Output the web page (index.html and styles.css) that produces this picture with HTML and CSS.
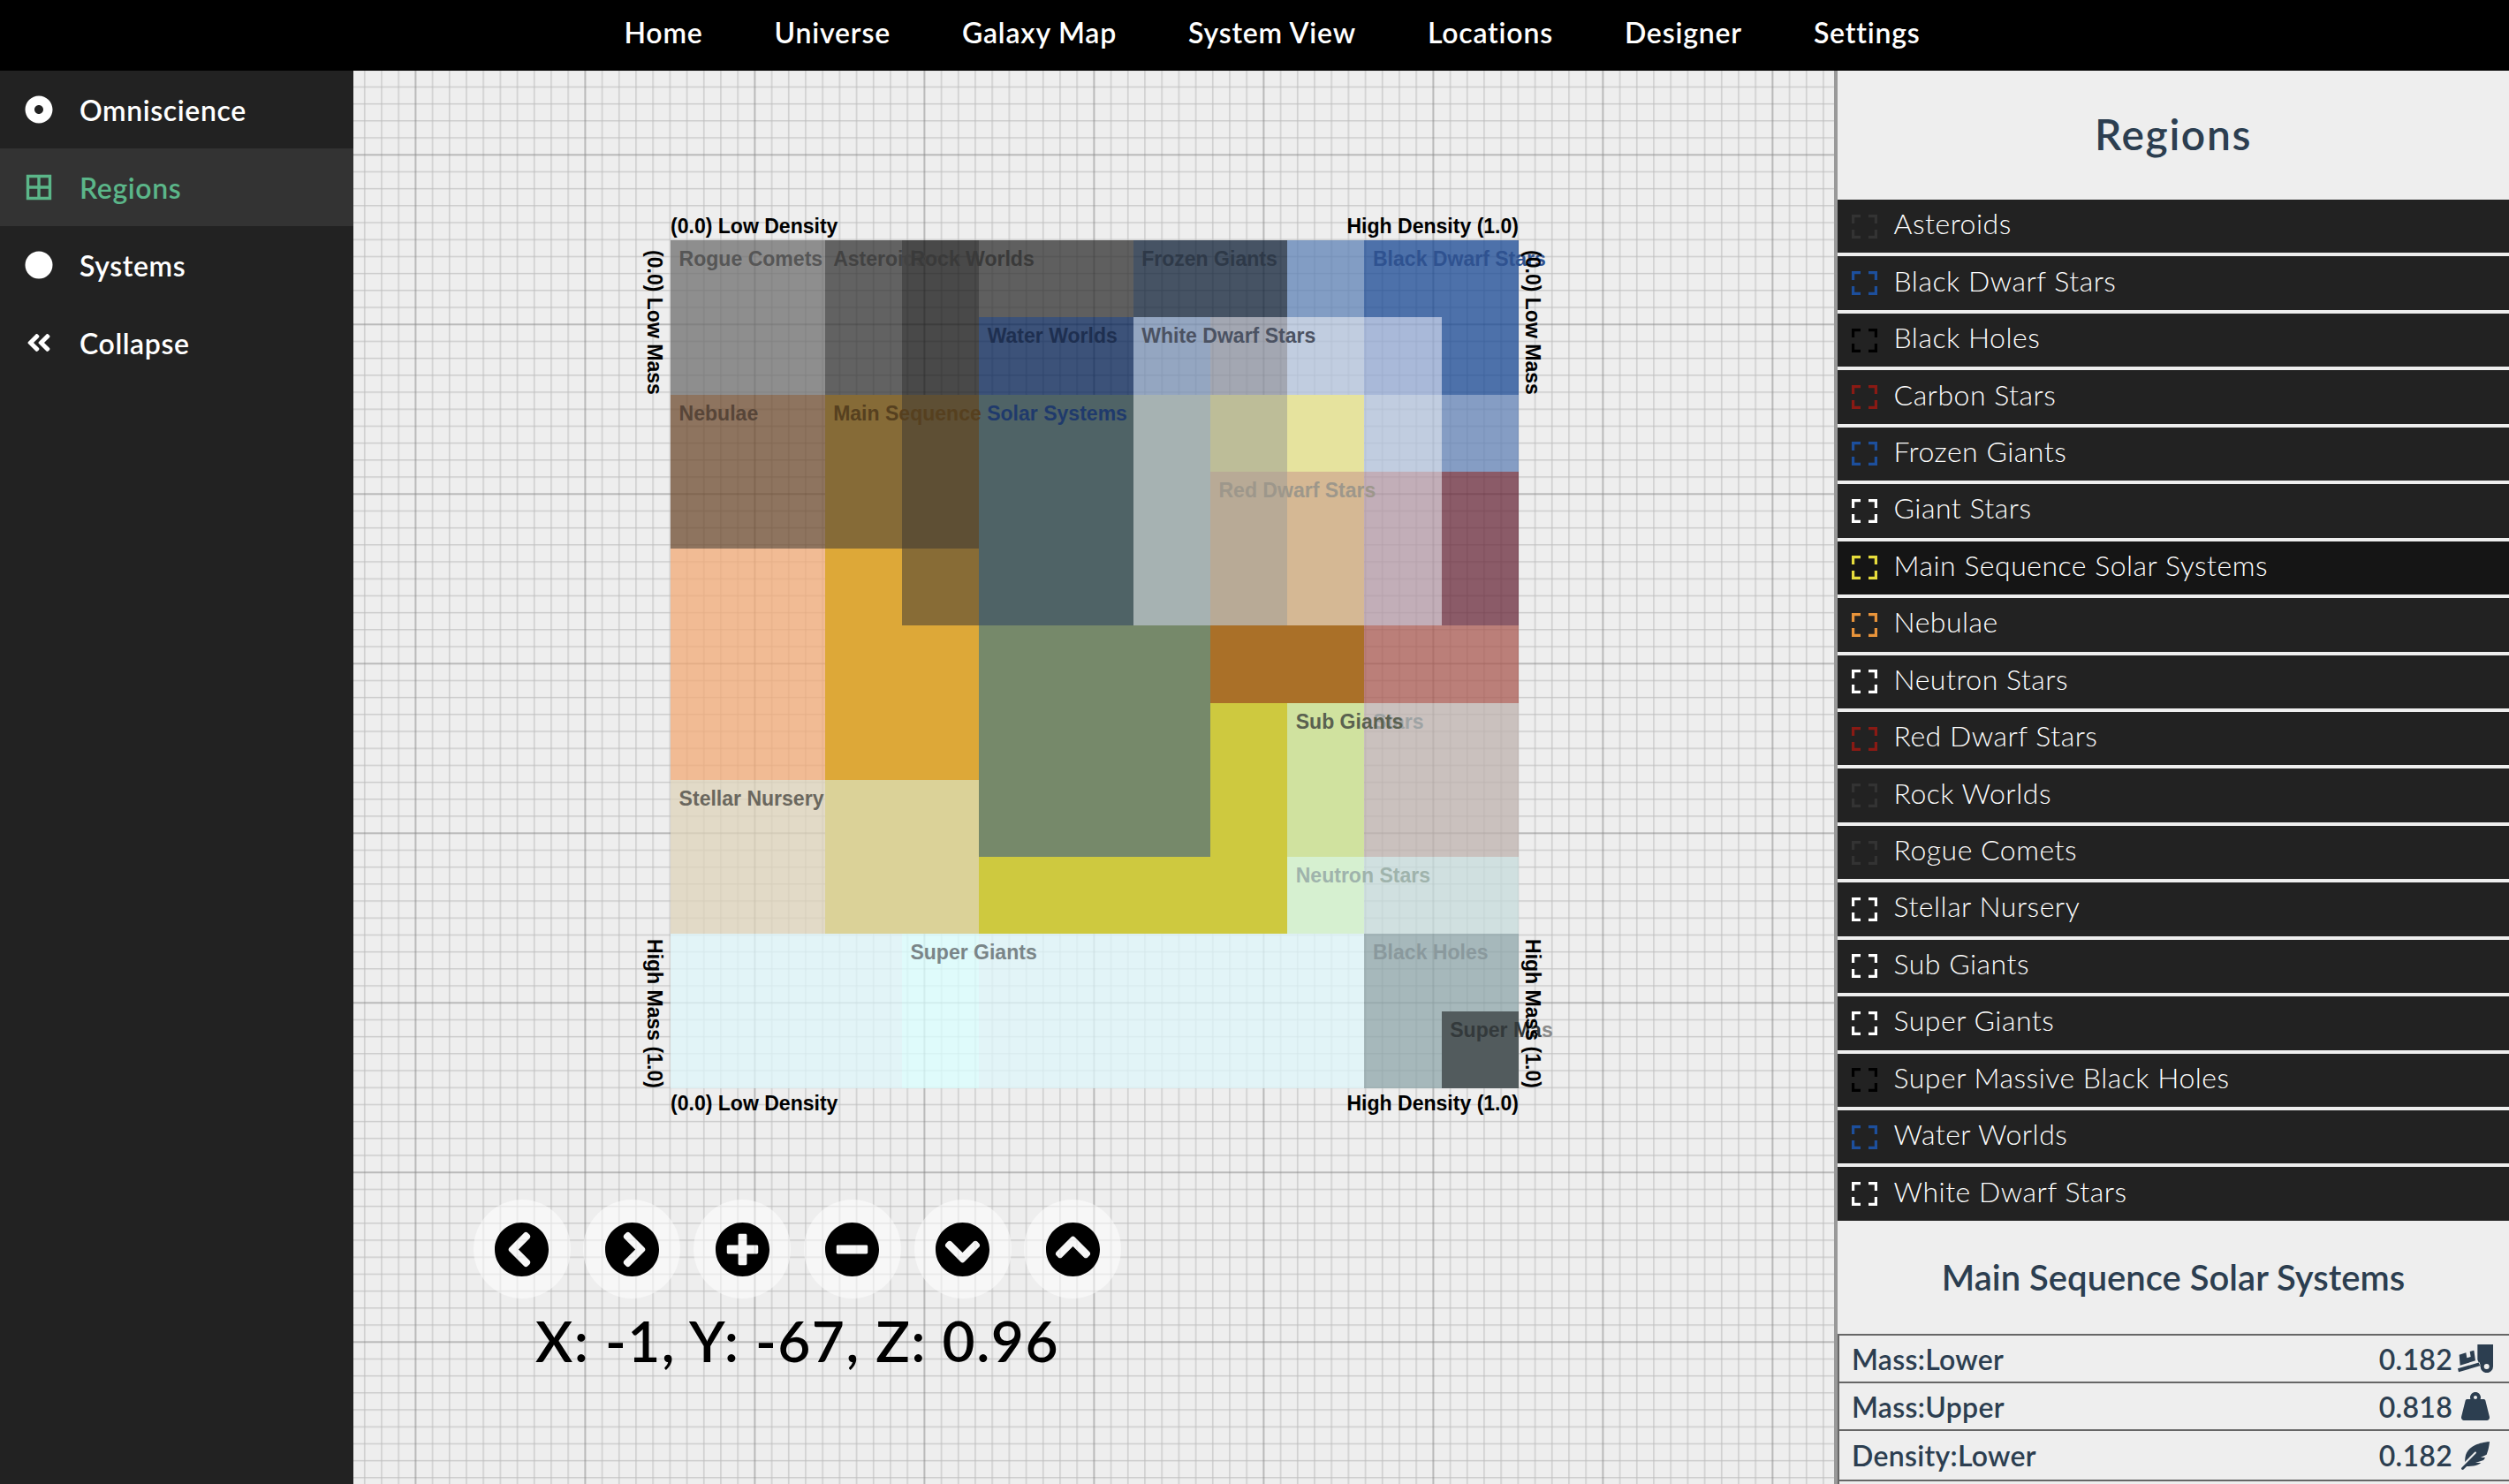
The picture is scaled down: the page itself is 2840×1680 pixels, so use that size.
FILE: index.html
```html
<!DOCTYPE html>
<html lang="en">
<head>
<meta charset="utf-8">
<title>Regions</title>
<link rel="stylesheet" href="styles.css">
</head>
<body>
<div class="app">
  <nav class="topnav">
    <a>Home</a><a>Universe</a><a>Galaxy Map</a><a>System View</a><a>Locations</a><a>Designer</a><a>Settings</a>
  </nav>

  <aside class="sidebar">
    <a class="side-item">
      <svg class="side-icon" viewBox="0 0 512 512"><path d="M256 8C119 8 8 119 8 256s111 248 248 248 248-111 248-248S393 8 256 8zm80 248c0 44.112-35.888 80-80 80s-80-35.888-80-80 35.888-80 80-80 80 35.888 80 80z"/></svg>
      <span>Omniscience</span>
    </a>
    <a class="side-item active">
      <svg class="side-icon" viewBox="0 0 32 32"><path class="grid-glyph" d="M3.5 3.5h25v25h-25zM16 3.500v25M3.500 16h25"/></svg>
      <span>Regions</span>
    </a>
    <a class="side-item">
      <svg class="side-icon" viewBox="0 0 512 512"><circle cx="256" cy="256" r="248"/></svg>
      <span>Systems</span>
    </a>
    <a class="side-item">
      <svg class="side-icon" viewBox="0 0 448 512"><path d="M223.7 239l136-136c9.400-9.400 24.600-9.400 33.900 0l22.600 22.600c9.400 9.400 9.400 24.600 0 33.900L319.900 256l96.400 96.400c9.400 9.400 9.400 24.600 0 33.900L393.700 409c-9.400 9.400-24.600 9.400-33.900 0l-136-136c-9.500-9.400-9.500-24.600-.1-34zm-192 34l136 136c9.400 9.400 24.600 9.400 33.900 0l22.600-22.600c9.400-9.400 9.400-24.600 0-33.900L127.900 256l96.400-96.400c9.400-9.400 9.400-24.600 0-33.900L201.700 103c-9.400-9.400-24.600-9.400-33.900 0l-136 136c-9.500 9.400-9.500 24.600-.1 34z"/></svg>
      <span>Collapse</span>
    </a>
  </aside>

  <main class="canvas">
    <svg class="gridlines" width="100%" height="100%">
      <defs>
        <pattern id="tile" width="192" height="192" patternUnits="userSpaceOnUse" patternTransform="translate(70.4 95.3)">
          <path class="minor" d="M19.2 0v192M38.400 0v192M57.600 0v192M76.800 0v192M96 0v192M115.200 0v192M134.400 0v192M153.600 0v192M172.800 0v192M0 19.200h192M0 38.400h192M0 57.600h192M0 76.800h192M0 96h192M0 115.200h192M0 134.400h192M0 153.600h192M0 172.800h192"/>
          <path class="major" d="M0 0v192M192 0v192M0 0h192M0 192h192"/>
        </pattern>
      </defs>
      <rect width="100%" height="100%" fill="url(#tile)"/>
    </svg>

    <section class="chart">
      <div class="axis-h axis-top">
        <span>(0.0) Low Density</span><span>High Density (1.0)</span>
      </div>
      <div class="axis-v axis-left">
        <span>(0.0) Low Mass</span><span>High Mass (1.0)</span>
      </div>
      <div class="plot">
        <i class="p p1"></i><i class="p p2"></i><i class="p p3"></i><i class="p p4"></i><i class="p p5"></i>
        <i class="p p6"></i><i class="p p7"></i><i class="p p8"></i><i class="p p9"></i><i class="p p10"></i>
        <i class="p p11"></i><i class="p p12"></i><i class="p p13"></i><i class="p p14"></i><i class="p p15"></i>
        <i class="p p16"></i><i class="p p17"></i><i class="p p18"></i><i class="p p19"></i><i class="p p20"></i>
        <i class="p p21"></i><i class="p p22"></i><i class="p p23"></i><i class="p p24"></i><i class="p p25"></i>
        <i class="p p26"></i><i class="p p27"></i><i class="p p28"></i><i class="p p29"></i><i class="p p30"></i>
        <i class="p p31"></i><i class="p p32"></i><i class="p p33"></i><i class="p p34"></i><i class="p p35"></i>
        <i class="p p36"></i><i class="p p37"></i><i class="p p38"></i><i class="p p39"></i><i class="p p40"></i>
        <i class="p p41"></i><i class="p p42"></i><i class="p p43"></i><i class="p p44"></i><i class="p p45"></i>
        <i class="p p46"></i><i class="p p47"></i>

        <b class="l l-rogue">Rogue Comets</b>
        <b class="l l-asteroids">Asteroids</b>
        <b class="l l-rock">Rock Worlds</b>
        <b class="l l-frozen">Frozen Giants</b>
        <b class="l l-bdwarf">Black Dwarf Stars</b>
        <b class="l l-water">Water Worlds</b>
        <b class="l l-wdwarf">White Dwarf Stars</b>
        <b class="l l-nebulae">Nebulae</b>
        <b class="l l-main">Main Sequence <em class="l-solar">Solar Systems</em></b>
        <b class="l l-rdwarf">Red Dwarf Stars</b>
        <b class="l l-stars">Stars</b>
        <b class="l l-sub">Sub Giants</b>
        <b class="l l-stellar">Stellar Nursery</b>
        <b class="l l-neutron">Neutron Stars</b>
        <b class="l l-super">Super Giants</b>
        <b class="l l-bholes">Black Holes</b>
        <b class="l l-smbh">Super Ma<em class="l-faint">s</em></b>
      </div>
      <div class="axis-v axis-right">
        <span>(0.0) Low Mass</span><span>High Mass (1.0)</span>
      </div>
      <div class="axis-h axis-bottom">
        <span>(0.0) Low Density</span><span>High Density (1.0)</span>
      </div>
    </section>

    <div class="controls">
      <div class="buttons">
        <button class="halo"><svg viewBox="0 0 512 512"><path d="M256 504C119 504 8 393 8 256S119 8 256 8s248 111 248 248-111 248-248 248zM142.100 273l135.500 135.500c9.400 9.400 24.600 9.400 33.900 0l17-17c9.400-9.400 9.400-24.600 0-33.900L226.900 256l101.600-101.600c9.400-9.400 9.400-24.600 0-33.900l-17-17c-9.400-9.400-24.600-9.400-33.900 0L142.100 239c-9.400 9.400-9.400 24.600 0 34z"/></svg></button>
        <button class="halo"><svg viewBox="0 0 512 512"><path d="M256 8c137 0 248 111 248 248S393 504 256 504 8 393 8 256 119 8 256 8zm113.900 231L234.400 103.500c-9.400-9.400-24.600-9.400-33.900 0l-17 17c-9.400 9.400-9.400 24.600 0 33.900L285.100 256 183.500 357.600c-9.400 9.400-9.400 24.600 0 33.900l17 17c9.400 9.400 24.600 9.400 33.900 0L369.900 273c9.400-9.400 9.400-24.600 0-34z"/></svg></button>
        <button class="halo"><svg viewBox="0 0 512 512"><path d="M256 8C119 8 8 119 8 256s111 248 248 248 248-111 248-248S393 8 256 8zm144 276c0 6.600-5.400 12-12 12h-92v92c0 6.600-5.400 12-12 12h-56c-6.600 0-12-5.400-12-12v-92h-92c-6.600 0-12-5.400-12-12v-56c0-6.600 5.400-12 12-12h92v-92c0-6.600 5.400-12 12-12h56c6.600 0 12 5.400 12 12v92h92c6.600 0 12 5.400 12 12v56z"/></svg></button>
        <button class="halo"><svg viewBox="0 0 512 512"><path d="M256 8C119 8 8 119 8 256s111 248 248 248 248-111 248-248S393 8 256 8zM124 296c-6.600 0-12-5.400-12-12v-56c0-6.600 5.400-12 12-12h264c6.600 0 12 5.400 12 12v56c0 6.600-5.400 12-12 12H124z"/></svg></button>
        <button class="halo"><svg viewBox="0 0 512 512"><path d="M504 256c0 137-111 248-248 248S8 393 8 256 119 8 256 8s248 111 248 248zM273 369.900l135.500-135.500c9.400-9.400 9.400-24.600 0-33.900l-17-17c-9.400-9.400-24.600-9.400-33.900 0L256 285.100 154.400 183.500c-9.400-9.400-24.600-9.400-33.900 0l-17 17c-9.400 9.400-9.400 24.600 0 33.900L239 369.900c9.400 9.400 24.600 9.400 34 0z"/></svg></button>
        <button class="halo"><svg viewBox="0 0 512 512"><path d="M8 256C8 119 119 8 256 8s248 111 248 248-111 248-248 248S8 393 8 256zm231-113.900L103.500 277.600c-9.400 9.400-9.400 24.600 0 33.900l17 17c9.400 9.400 24.600 9.400 33.900 0L256 226.900l101.600 101.600c9.400 9.400 24.600 9.400 33.900 0l17-17c9.400-9.400 9.400-24.600 0-33.900L273 142.100c-9.400-9.400-24.600-9.400-34 0z"/></svg></button>
      </div>
      <div class="coords">X: -1, Y: -67, Z: 0.96</div>
    </div>
  </main>

  <aside class="panel">
    <h1 class="panel-title">Regions</h1>
    <ul class="region-list">
      <li><svg class="corners c-dim" viewBox="0 0 29 27"><path d="M1.500 10V1.500H10M19 1.500h8.500V10M27.500 17v8.500H19M10 25.500H1.500V17"/></svg>Asteroids</li>
      <li><svg class="corners c-blue" viewBox="0 0 29 27"><path d="M1.500 10V1.500H10M19 1.500h8.500V10M27.500 17v8.500H19M10 25.500H1.500V17"/></svg>Black Dwarf Stars</li>
      <li><svg class="corners c-black" viewBox="0 0 29 27"><path d="M1.500 10V1.500H10M19 1.500h8.500V10M27.500 17v8.500H19M10 25.500H1.500V17"/></svg>Black Holes</li>
      <li><svg class="corners c-red" viewBox="0 0 29 27"><path d="M1.500 10V1.500H10M19 1.500h8.500V10M27.500 17v8.500H19M10 25.500H1.500V17"/></svg>Carbon Stars</li>
      <li><svg class="corners c-blue" viewBox="0 0 29 27"><path d="M1.500 10V1.500H10M19 1.500h8.500V10M27.500 17v8.500H19M10 25.500H1.500V17"/></svg>Frozen Giants</li>
      <li><svg class="corners c-white" viewBox="0 0 29 27"><path d="M1.500 10V1.500H10M19 1.500h8.500V10M27.500 17v8.500H19M10 25.500H1.500V17"/></svg>Giant Stars</li>
      <li class="selected"><svg class="corners c-yellow" viewBox="0 0 29 27"><path d="M1.500 10V1.500H10M19 1.500h8.500V10M27.500 17v8.500H19M10 25.500H1.500V17"/></svg>Main Sequence Solar Systems</li>
      <li><svg class="corners c-orange" viewBox="0 0 29 27"><path d="M1.500 10V1.500H10M19 1.500h8.500V10M27.500 17v8.500H19M10 25.500H1.500V17"/></svg>Nebulae</li>
      <li><svg class="corners c-white" viewBox="0 0 29 27"><path d="M1.500 10V1.500H10M19 1.500h8.500V10M27.500 17v8.500H19M10 25.500H1.500V17"/></svg>Neutron Stars</li>
      <li><svg class="corners c-red" viewBox="0 0 29 27"><path d="M1.500 10V1.500H10M19 1.500h8.500V10M27.500 17v8.500H19M10 25.500H1.500V17"/></svg>Red Dwarf Stars</li>
      <li><svg class="corners c-dim" viewBox="0 0 29 27"><path d="M1.500 10V1.500H10M19 1.500h8.500V10M27.500 17v8.500H19M10 25.500H1.500V17"/></svg>Rock Worlds</li>
      <li><svg class="corners c-dim" viewBox="0 0 29 27"><path d="M1.500 10V1.500H10M19 1.500h8.500V10M27.500 17v8.500H19M10 25.500H1.500V17"/></svg>Rogue Comets</li>
      <li><svg class="corners c-white" viewBox="0 0 29 27"><path d="M1.500 10V1.500H10M19 1.500h8.500V10M27.500 17v8.500H19M10 25.500H1.500V17"/></svg>Stellar Nursery</li>
      <li><svg class="corners c-white" viewBox="0 0 29 27"><path d="M1.500 10V1.500H10M19 1.500h8.500V10M27.500 17v8.500H19M10 25.500H1.500V17"/></svg>Sub Giants</li>
      <li><svg class="corners c-white" viewBox="0 0 29 27"><path d="M1.500 10V1.500H10M19 1.500h8.500V10M27.500 17v8.500H19M10 25.500H1.500V17"/></svg>Super Giants</li>
      <li><svg class="corners c-black" viewBox="0 0 29 27"><path d="M1.500 10V1.500H10M19 1.500h8.500V10M27.500 17v8.500H19M10 25.500H1.500V17"/></svg>Super Massive Black Holes</li>
      <li><svg class="corners c-blue" viewBox="0 0 29 27"><path d="M1.500 10V1.500H10M19 1.500h8.500V10M27.500 17v8.500H19M10 25.500H1.500V17"/></svg>Water Worlds</li>
      <li><svg class="corners c-white" viewBox="0 0 29 27"><path d="M1.500 10V1.500H10M19 1.500h8.500V10M27.500 17v8.500H19M10 25.500H1.500V17"/></svg>White Dwarf Stars</li>
    </ul>
    <h2 class="detail-title">Main Sequence Solar Systems</h2>
    <div class="props">
      <div class="prop">
        <span>Mass:Lower</span>
        <span class="prop-value">0.182
          <svg class="prop-icon" viewBox="0 0 120 96"><path fill-rule="evenodd" d="M67 0H120V75A21 21 0 0 1 77 75L67 52ZM89 75a9 9 0 1 0 18 0a9 9 0 1 0-18 0ZM0 82L74 61L77 72L3 94ZM5 35L28 28L31 46L44 42L41 24L55 20L60 55L8 71Z"/></svg>
        </span>
      </div>
      <div class="prop">
        <span>Mass:Upper</span>
        <span class="prop-value">0.818
          <svg class="prop-icon" viewBox="-64 0 640 512"><path d="M510.280 445.860l-73.030-292.130c-3.800-15.190-16.440-25.720-30.870-25.720h-60.250c3.570-10.050 5.880-20.720 5.880-32 0-53.020-42.980-96-96-96s-96 42.980-96 96c0 11.280 2.300 21.950 5.880 32h-60.250c-14.430 0-27.080 10.540-30.870 25.720L1.720 445.860C-6.610 479.170 16.380 512 48.030 512h415.950c31.640 0 54.630-32.830 46.300-66.140zM256 128c-17.640 0-32-14.360-32-32s14.360-32 32-32 32 14.360 32 32-14.360 32-32 32z"/></svg>
        </span>
      </div>
      <div class="prop prop-tall">
        <span>Density:Lower</span>
        <span class="prop-value">0.182
          <svg class="prop-icon" viewBox="-64 0 640 512"><path d="M512 0C460.220 3.560 96.440 38.200 71.010 287.610c-3.090 26.660-4.840 53.440-5.990 80.240l178.870-178.690c6.250-6.250 16.400-6.250 22.650 0s6.250 16.380 0 22.630L7.040 471.030c-9.380 9.370-9.380 24.570 0 33.940 9.380 9.370 24.590 9.370 33.980 0l57.130-57.070c42.090-.14 84.150-2.530 125.960-7.360 53.480-5.440 97.020-26.470 132.580-56.540H255.740l146.790-48.880c11.250-14.890 21.370-30.710 30.450-47.120h-81.140l106.540-53.210C500.290 132.860 510.190 26.260 512 0z"/></svg>
        </span>
      </div>
      <div class="prop">
        <span>Density:Upper</span>
        <span class="prop-value">0.818</span>
      </div>
    </div>
  </aside>
</div>
</body>
</html>
```

FILE: styles.css
```css
* { box-sizing: border-box; }
html, body { margin: 0; height: 100%; }
body { font-family: Lato, "Noto Sans", sans-serif; background: #eee; overflow: hidden; }

.app {
  display: grid;
  grid-template-columns: 400px 1fr 764px;
  grid-template-rows: 80px 1600px;
  width: 2840px;
  height: 1680px;
}

/* top navigation */
.topnav {
  grid-column: 1 / 4;
  background: #000;
  color: #fff;
  display: flex;
  justify-content: center;
  align-items: center;
  gap: 81px;
  padding: 0 0 8px 40px;
  font-size: 32px;
  font-weight: 600;
  letter-spacing: .8px;
}

/* left sidebar */
.sidebar { background: #222; color: #fff; font-size: 32px; font-weight: 600; letter-spacing: .6px; }
.side-item {
  height: 88px;
  display: flex;
  align-items: center;
  gap: 30px;
  padding: 0 28px;
}
.side-item.active { background: #333; color: #5bb689; }
.side-icon { width: 32px; height: 32px; flex: none; fill: currentColor; }
.grid-glyph { fill: none; stroke: currentColor; stroke-width: 3.400; }

/* canvas */
.canvas { position: relative; overflow: hidden; background: #eee; }
.gridlines { position: absolute; inset: 0; display: block; }
.minor { fill: none; stroke: #bcbcbc; stroke-width: 1; }
.major { fill: none; stroke: #858585; stroke-width: 1; }

.chart {
  position: absolute;
  left: 327.500px;
  top: 164px;
  display: grid;
  grid-template-columns: 31.500px 960px 36px;
  grid-template-rows: 28px 960px 34px;
  font-family: "Liberation Sans", Arial, sans-serif;
  font-size: 23.040px;
  font-weight: 700;
  color: #000;
  line-height: 26px;
}
.axis-h {
  grid-column: 2;
  display: flex;
  justify-content: space-between;
  white-space: nowrap;
}
.axis-top { margin-top: -1.500px; }
.axis-bottom { grid-row: 3; padding-top: 4px; }
.axis-v {
  grid-row: 2;
  display: flex;
  flex-direction: column;
  align-items: flex-start;
  justify-content: space-between;
  padding-top: 11px;
  position: relative;
  z-index: 2;
  white-space: nowrap;
}
.axis-v span { writing-mode: vertical-rl; line-height: 24px; }
.axis-left { grid-column: 1; margin-left: 1px; }
.axis-right { grid-column: 3; margin-left: 4px; }

.plot {
  grid-column: 2;
  grid-row: 2;
  display: grid;
  grid-template-columns: repeat(11, 87.2727px);
  grid-template-rows: repeat(11, 87.2727px);
}
.p { display: block; }

.p1  { grid-area: 1 / 1 / 3 / 3;    background: rgba(110,110,110,.75); }
.p2  { grid-area: 1 / 3 / 3 / 4;    background: rgba(51,51,51,.75); }
.p3  { grid-area: 1 / 4 / 3 / 5;    background: rgba(17,17,17,.75); }
.p4  { grid-area: 1 / 5 / 2 / 7;    background: rgba(47,47,47,.75); }
.p5  { grid-area: 1 / 7 / 2 / 9;    background: rgba(14,31,54,.75); }
.p6  { grid-area: 1 / 9 / 2 / 10;   background: rgba(93,129,182,.75); }
.p7  { grid-area: 1 / 10 / 2 / 12;  background: rgba(23,71,147,.75); }
.p47 { grid-area: 2 / 11 / 3 / 12;  background: rgba(23,71,147,.75); }
.p8  { grid-area: 2 / 5 / 3 / 7;    background: rgba(0,30,82,.75); }
.p9  { grid-area: 2 / 7 / 3 / 8;    background: rgba(118,141,178,.75); }
.p10 { grid-area: 2 / 8 / 3 / 9;    background: rgba(137,143,158,.75); }
.p11 { grid-area: 2 / 9 / 3 / 10;   background: rgba(177,194,219,.75); }
.p12 { grid-area: 2 / 10 / 3 / 11;  background: rgba(145,167,209,.75); }
.p13 { grid-area: 3 / 1 / 5 / 3;    background: rgba(110,75,47,.75); }
.p14 { grid-area: 3 / 3 / 5 / 4;    background: #866b37; }
.p15 { grid-area: 3 / 4 / 5 / 5;    background: #5e4f34; }
.p16 { grid-area: 3 / 5 / 6 / 7;    background: #4f6366; }
.p17 { grid-area: 3 / 7 / 6 / 8;    background: #a6b2b2; }
.p18 { grid-area: 3 / 8 / 4 / 9;    background: #bdbd98; }
.p19 { grid-area: 3 / 9 / 4 / 10;   background: #e6e39e; }
.p20 { grid-area: 3 / 10 / 4 / 11;  background: rgba(177,194,219,.75); }
.p21 { grid-area: 3 / 11 / 4 / 12;  background: rgba(97,130,182,.75); }
.p22 { grid-area: 4 / 8 / 6 / 9;    background: #b8aa96; }
.p23 { grid-area: 4 / 9 / 6 / 10;   background: #d5b894; }
.p24 { grid-area: 4 / 10 / 6 / 11;  background: rgba(179,152,165,.75); }
.p25 { grid-area: 4 / 11 / 6 / 12;  background: rgba(106,41,59,.75); }
.p26 { grid-area: 5 / 1 / 8 / 3;    background: rgba(241,170,118,.75); }
.p27 { grid-area: 5 / 3 / 8 / 4;    background: #dda838; }
.p28 { grid-area: 5 / 4 / 6 / 5;    background: #886c36; }
.p29 { grid-area: 6 / 4 / 8 / 5;    background: #dda838; }
.p30 { grid-area: 6 / 5 / 9 / 8;    background: #76896a; }
.p31 { grid-area: 6 / 8 / 7 / 10;   background: #aa7028; }
.p32 { grid-area: 6 / 10 / 7 / 12;  background: rgba(170,90,81,.75); }
.p33 { grid-area: 7 / 8 / 9 / 9;    background: #cec93f; }
.p34 { grid-area: 7 / 9 / 9 / 10;   background: #d0e29f; }
.p35 { grid-area: 7 / 10 / 9 / 12;  background: rgba(190,177,174,.75); }
.p36 { grid-area: 8 / 1 / 10 / 3;   background: rgba(222,211,186,.75); }
.p37 { grid-area: 8 / 3 / 10 / 5;   background: #dbd298; }
.p38 { grid-area: 9 / 5 / 10 / 9;   background: #cec93f; }
.p39 { grid-area: 9 / 9 / 10 / 10;  background: #d6f0d0; }
.p40 { grid-area: 9 / 10 / 10 / 12; background: rgba(198,219,219,.75); }
.p41 { grid-area: 10 / 1 / 12 / 4;  background: rgba(222,246,250,.75); }
.p42 { grid-area: 10 / 4 / 12 / 5;  background: rgba(217,255,255,.75); }
.p43 { grid-area: 10 / 5 / 12 / 10; background: rgba(222,246,250,.75); }
.p44 { grid-area: 10 / 10 / 11 / 12; background: rgba(141,165,170,.75); }
.p45 { grid-area: 11 / 10 / 12 / 11; background: rgba(141,165,170,.75); }
.p46 { grid-area: 11 / 11 / 12 / 12; background: #525b5d; }

/* Region captions */
.l {
  padding: 8px 0 0 9.600px;
  white-space: nowrap;
  align-self: start;
  position: relative;
  font-weight: 700;
}
.l em { font-style: normal; }
.l-rogue     { grid-area: 1 / 1;  color: #565656; }
.l-asteroids { grid-area: 1 / 3;  color: #424242; }
.l-rock      { grid-area: 1 / 4;  color: #3a3a3a; }
.l-frozen    { grid-area: 1 / 7;  color: #2e3948; }
.l-bdwarf    { grid-area: 1 / 10; color: #2f5290; }
.l-water     { grid-area: 2 / 5;  color: #1e2f50; }
.l-wdwarf    { grid-area: 2 / 7;  color: #4b5262; }
.l-nebulae   { grid-area: 3 / 1;  color: #574538; }
.l-main      { grid-area: 3 / 3;  color: #56401f; }
.l-solar     { color: #1f3a6c; }
.l-rdwarf    { grid-area: 4 / 8;  color: #9d978b; }
.l-stars     { grid-area: 7 / 10; color: #9ea3a4; }
.l-sub       { grid-area: 7 / 9;  color: #5a6150; }
.l-stellar   { grid-area: 8 / 1;  color: #6a675e; }
.l-neutron   { grid-area: 9 / 9;  color: #9fb3ac; }
.l-super     { grid-area: 10 / 4; color: #7a8588; }
.l-bholes    { grid-area: 10 / 10; color: #8a999d; }
.l-smbh      { grid-area: 11 / 11; color: #33393b; }
.l-faint     { color: #8a8a8a; }

/* map controls */
.controls {
  position: absolute;
  left: 135.500px;
  top: 1278px;
  width: 734px;
  display: flex;
  flex-direction: column;
  align-items: center;
  gap: 16px;
}
.buttons { display: flex; gap: 14.800px; }
.halo {
  width: 110px;
  height: 112px;
  padding: 0;
  border: 0;
  border-radius: 50%;
  background: rgba(255,255,255,.5);
  display: flex;
  align-items: center;
  justify-content: center;
}
.halo svg { width: 63px; height: 63px; fill: #000; }
.coords { font-size: 64px; line-height: 64px; font-weight: 600; letter-spacing: 1.500px; color: #000; white-space: nowrap; }

/* right panel */
.panel {
  border-left: 4px solid #999;
  background: #eee;
  overflow: hidden;
  color: #2c3e50;
}
.panel-title {
  margin: 0;
  height: 146px;
  padding-bottom: 4px;
  display: flex;
  align-items: center;
  justify-content: center;
  font-size: 48px;
  font-weight: 600;
  letter-spacing: 1.600px;
}
.region-list {
  list-style: none;
  margin: 0;
  padding: 0;
  display: grid;
  grid-auto-rows: 60.440px;
  row-gap: 4px;
}
.region-list li {
  background: #222;
  color: #fff;
  font-size: 32px;
  font-weight: 300;
  letter-spacing: .5px;
  display: flex;
  align-items: center;
  gap: 18.500px;
  padding: 0 0 7px 16px;
}
.region-list li.selected { background: #151515; }
.corners { width: 29px; height: 27px; flex: none; fill: none; stroke-width: 3.400; position: relative; top: 3.500px; }
.c-dim { stroke: #333; }
.c-blue { stroke: #1d4f9c; }
.c-black { stroke: #000; }
.c-red { stroke: #8a1a14; }
.c-white { stroke: #fff; }
.c-yellow { stroke: #e6dc3c; }
.c-orange { stroke: #e8933a; }

.detail-title {
  margin: 0;
  height: 128px;
  display: flex;
  align-items: center;
  justify-content: center;
  font-size: 40px;
  font-weight: 600;
}
.props { border-left: 2px solid #666; }
.prop {
  height: 54px;
  border-top: 2px solid #666;
  display: flex;
  align-items: center;
  justify-content: space-between;
  padding: 1px 18px 0 14px;
  font-size: 32px;
  font-weight: 600;
  letter-spacing: .3px;
}
.prop-tall { height: 57px; }
.prop-value { display: flex; align-items: center; gap: 6px; }
.prop-icon { width: 40px; height: 32px; fill: #2c3e50; }
```
